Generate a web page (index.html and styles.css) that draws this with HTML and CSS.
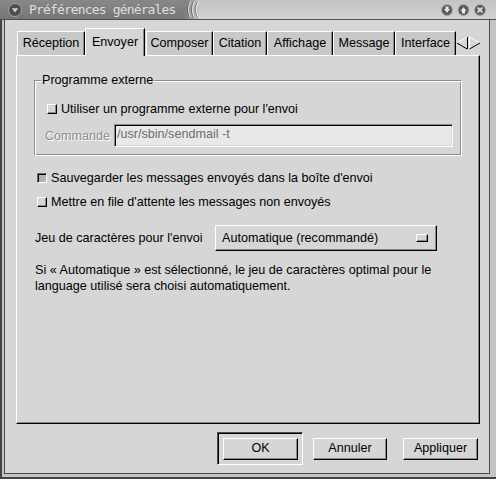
FILE: index.html
```html
<!DOCTYPE html>
<html lang="fr">
<head>
<meta charset="utf-8">
<title>Préférences générales</title>
<link rel="stylesheet" href="styles.css">
</head>
<body>
<div class="window">
  <div class="titlebar">
    <div class="title-main">
      <svg class="menu-btn" width="16" height="16" viewBox="0 0 16 16">
        <circle cx="8" cy="8" r="6.5" fill="#4e4e4e" stroke="#a4a4a4" stroke-width="1"/>
        <path d="M4.8 6.2 L11.2 6.2 L8 10.6 Z" fill="#d4d4d4"/>
      </svg>
      <span class="title">Préférences générales</span>
    </div>
    <svg class="grip" width="14" height="19" viewBox="0 0 14 19">
      <path d="M4.5 1.5 Q0.5 9.5 4.5 17.5" fill="none" stroke="#5e5e5e"/>
      <path d="M5.5 1.5 Q1.5 9.5 5.5 17.5" fill="none" stroke="#e6e6e6"/>
      <path d="M8.5 1.5 Q4.5 9.5 8.5 17.5" fill="none" stroke="#6e6e6e"/>
      <path d="M9.5 1.5 Q5.5 9.5 9.5 17.5" fill="none" stroke="#ececec"/>
      <path d="M12.5 1.5 Q8.5 9.5 12.5 17.5" fill="none" stroke="#7e7e7e"/>
      <path d="M13.5 1.5 Q9.5 9.5 13.5 17.5" fill="none" stroke="#f0f0f0"/>
    </svg>
    <div class="title-fill"></div>
    <svg class="wm-buttons" width="56" height="19" viewBox="0 0 56 19">
      <circle cx="11" cy="10" r="5.5" fill="#5a5a5a" stroke="#a8a8a8"/>
      <path d="M9.5 6.5 H12.5 V9 H14 L11 12.8 L8 9 H9.5 Z" fill="#e6e6e6"/>
      <circle cx="27.5" cy="10" r="5.5" fill="#5a5a5a" stroke="#a8a8a8"/>
      <path d="M26 13.5 H29 V11 H30.5 L27.5 7.2 L24.5 11 H26 Z" fill="#e6e6e6"/>
      <circle cx="44" cy="10" r="5.5" fill="#5a5a5a" stroke="#a8a8a8"/>
      <path d="M41.6 7.6 L46.4 12.4 M46.4 7.6 L41.6 12.4" stroke="#e6e6e6" stroke-width="1.6"/>
    </svg>
  </div>
  <div class="client">
    <div class="notebook">
      <div class="tabs">
        <div class="tab tab-reception">Réception</div>
        <div class="tab active tab-envoyer">Envoyer</div>
        <div class="tab tab-composer">Composer</div>
        <div class="tab tab-citation">Citation</div>
        <div class="tab tab-affichage">Affichage</div>
        <div class="tab tab-message">Message</div>
        <div class="tab tab-interface">Interface</div>
        <svg class="tab-arrows" width="25" height="14" viewBox="0 0 25 14">
          <path d="M11 1 L1 7" stroke="#ffffff" fill="none"/>
          <path d="M1 7 L11 13" stroke="#000000" fill="none"/>
          <path d="M11.5 1 V13" stroke="#000000" fill="none"/>
          <path d="M13.5 1 V13" stroke="#ffffff" fill="none"/>
          <path d="M13.5 1 L24 7" stroke="#ffffff" fill="none"/>
          <path d="M24 7 L13.5 13" stroke="#000000" fill="none"/>
        </svg>
      </div>
      <div class="panel">
        <div class="group">
          <span class="group-title">Programme externe</span>
          <label class="check check-inner"><span class="box"></span>Utiliser un programme externe pour l'envoi</label>
          <div class="field-row">
            <span class="field-label">Commande</span>
            <div class="entry">/usr/sbin/sendmail -t</div>
          </div>
        </div>
        <label class="check check-save"><span class="box checked"></span>Sauvegarder les messages envoyés dans la boîte d'envoi</label>
        <label class="check check-queue"><span class="box"></span>Mettre en file d'attente les messages non envoyés</label>
        <div class="charset-row">
          <span class="charset-label">Jeu de caractères pour l'envoi</span>
          <div class="option-menu">Automatique (recommandé)<span class="indicator"></span></div>
        </div>
        <p class="desc">Si « Automatique » est sélectionné, le jeu de caractères optimal pour le language utilisé sera choisi automatiquement.</p>
      </div>
    </div>
    <div class="actions">
      <div class="default-frame"><button class="btn btn-ok">OK</button></div>
      <button class="btn btn-cancel">Annuler</button>
      <button class="btn btn-apply">Appliquer</button>
    </div>
  </div>
</div>
</body>
</html>
```

FILE: styles.css
```css
* { box-sizing: border-box; }

html, body {
  margin: 0;
  padding: 0;
}

body {
  width: 496px;
  height: 479px;
  overflow: hidden;
  background: #3e4646;
  font-family: "Liberation Sans", Arial, sans-serif;
  font-size: 12.6px;
  color: #000;
}

.window {
  width: 496px;
  height: 479px;
  display: flex;
  flex-direction: column;
  background: #c4c4c4;
  border-left: 2px solid #3e4646;
  border-bottom: 2px solid #3e4646;
}

/* ---------- title bar ---------- */
.titlebar {
  flex: none;
  height: 20px;
  margin-left: -2px;
  display: flex;
  align-items: stretch;
  border-bottom: 1px solid #4e4e4e;
  background: linear-gradient(#c4c4c4, #d2d2d2);
}

.title-main {
  width: 186px;
  display: flex;
  align-items: center;
  padding-left: 7px;
  background: linear-gradient(#888888, #767676);
}

.menu-btn { flex: none; }

.title {
  margin-left: 6px;
  font-family: "DejaVu Sans Mono", monospace;
  font-size: 13px;
  letter-spacing: -0.85px;
  color: #dedede;
  white-space: nowrap;
}

.grip {
  flex: none;
  margin-left: -1px;
  background: linear-gradient(90deg, #7c7c7c 0, #9a9a9a 40%, #c6c6c6 100%);
}

.title-fill { flex: 1; }

.wm-buttons {
  flex: none;
  margin-right: 4px;
}

/* ---------- client area ---------- */
.client {
  flex: 1;
  display: flex;
  flex-direction: column;
  margin: 0 6px 3px 2px;
  border: 1px solid #4a4a4a;
  border-top: 0;
  background: #d6d6d6;
  padding: 8px 9px 8px 11px;
}

.notebook {
  flex: 1;
  display: flex;
  flex-direction: column;
}

.tabs {
  flex: none;
  height: 27px;
  display: flex;
  align-items: flex-end;
  padding-left: 1px;
}

.tab {
  flex: none;
  height: 24px;
  line-height: 23px;
  text-align: center;
  white-space: nowrap;
  background: #c8c8c8;
  border: 1px solid;
  border-color: #fff #000 transparent #fff;
  border-bottom: 0;
  box-shadow: inset -1px 0 0 #8a8a8a;
}

.tab.active {
  height: 28px;
  line-height: 26px;
  margin-bottom: -1px;
  background: #d6d6d6;
  position: relative;
  z-index: 1;
}

.tab-reception { width: 68px; }
.tab-envoyer { width: 60px; margin-right: 1px; }
.tab-composer { width: 67px; }
.tab-citation { width: 54px; }
.tab-affichage { width: 66px; }
.tab-message { width: 62px; }
.tab-interface { width: 61px; }

.tab-arrows {
  flex: none;
  align-self: flex-start;
  margin-top: 8px;
  margin-left: 0;
}

.panel {
  flex: 1;
  border: 1px solid;
  border-color: #fff #000 #000 #fff;
  box-shadow: inset -1px -1px 0 #8a8a8a;
  padding: 0 17px;
}

/* ---------- frame group ---------- */
.group {
  position: relative;
  margin-top: 24px;
  border: 1px solid;
  border-color: #8c8c8c #fff #fff #8c8c8c;
  box-shadow: inset 1px 1px 0 #fff, inset -1px -1px 0 #8c8c8c;
  padding: 20px 8px 8px 10px;
}

.group-title {
  position: absolute;
  top: -8px;
  left: 6px;
  padding: 0 1px;
  line-height: 14px;
  background: #d6d6d6;
}

.check {
  display: flex;
  align-items: center;
  height: 16px;
  line-height: 16px;
  white-space: nowrap;
}

.check-inner { margin-left: 2px; }
.check-save { margin: 14px 0 0 3px; }
.check-queue { margin: 8px 0 0 3px; }

.box {
  flex: none;
  width: 10px;
  height: 10px;
  margin-right: 4px;
  border: 1px solid;
  border-color: #fff #000 #000 #fff;
  box-shadow: inset -1px -1px 0 #8a8a8a;
  background: #d6d6d6;
}

.box.checked {
  border-color: #6a6a6a #fff #fff #6a6a6a;
  box-shadow: inset 1px 1px 0 #000;
  background: #b2b2b2;
}

.field-row {
  display: flex;
  align-items: center;
  margin-top: 7px;
}

.field-label {
  width: 69px;
  color: #8e8e8e;
  text-shadow: 1px 1px 0 #fff;
}

.entry {
  width: 339px;
  height: 23px;
  line-height: 19px;
  padding-left: 2px;
  border: 1px solid;
  border-color: #8a8a8a #fff #fff #8a8a8a;
  box-shadow: inset 1px 1px 0 #000, inset -1px -1px 0 #d6d6d6;
  background: #e8e8e8;
  color: #6c6c6c;
  white-space: nowrap;
}

/* ---------- charset ---------- */
.charset-row {
  display: flex;
  align-items: center;
  margin: 15px 0 0 1px;
}

.charset-label {
  width: 180px;
  white-space: nowrap;
}

.option-menu {
  width: 222px;
  height: 26px;
  display: flex;
  align-items: center;
  padding-left: 6px;
  border: 1px solid;
  border-color: #fff #000 #000 #fff;
  box-shadow: inset -1px -1px 0 #8a8a8a;
  white-space: nowrap;
}

.indicator {
  width: 12px;
  height: 8px;
  margin-left: auto;
  margin-right: 8px;
  border: 1px solid;
  border-color: #fff #000 #000 #fff;
  box-shadow: inset -1px -1px 0 #8a8a8a;
}

.desc {
  margin: 11px 0 0 1px;
  line-height: 16px;
  width: 420px;
}

/* ---------- buttons ---------- */
.actions {
  flex: none;
  height: 33px;
  margin-top: 8px;
  display: flex;
  justify-content: flex-end;
  align-items: center;
  padding-right: 2px;
}

.default-frame {
  width: 86px;
  height: 33px;
  padding: 5px 0 0 5px;
  border: 1px solid;
  border-color: #4a4a4a #fff #fff #4a4a4a;
  box-shadow: inset 1px 1px 0 #000;
}

.btn {
  display: block;
  height: 22px;
  margin: 0;
  padding: 0 0 2px;
  font: inherit;
  line-height: 18px;
  color: #000;
  text-align: center;
  background: #d6d6d6;
  border: 1px solid;
  border-color: #fff #000 #000 #fff;
  box-shadow: inset -1px -1px 0 #8a8a8a;
  border-radius: 0;
}

.btn-ok { width: 75px; }
.btn-cancel { width: 74px; margin-left: 10px; }
.btn-apply { width: 75px; margin-left: 16px; }
```
